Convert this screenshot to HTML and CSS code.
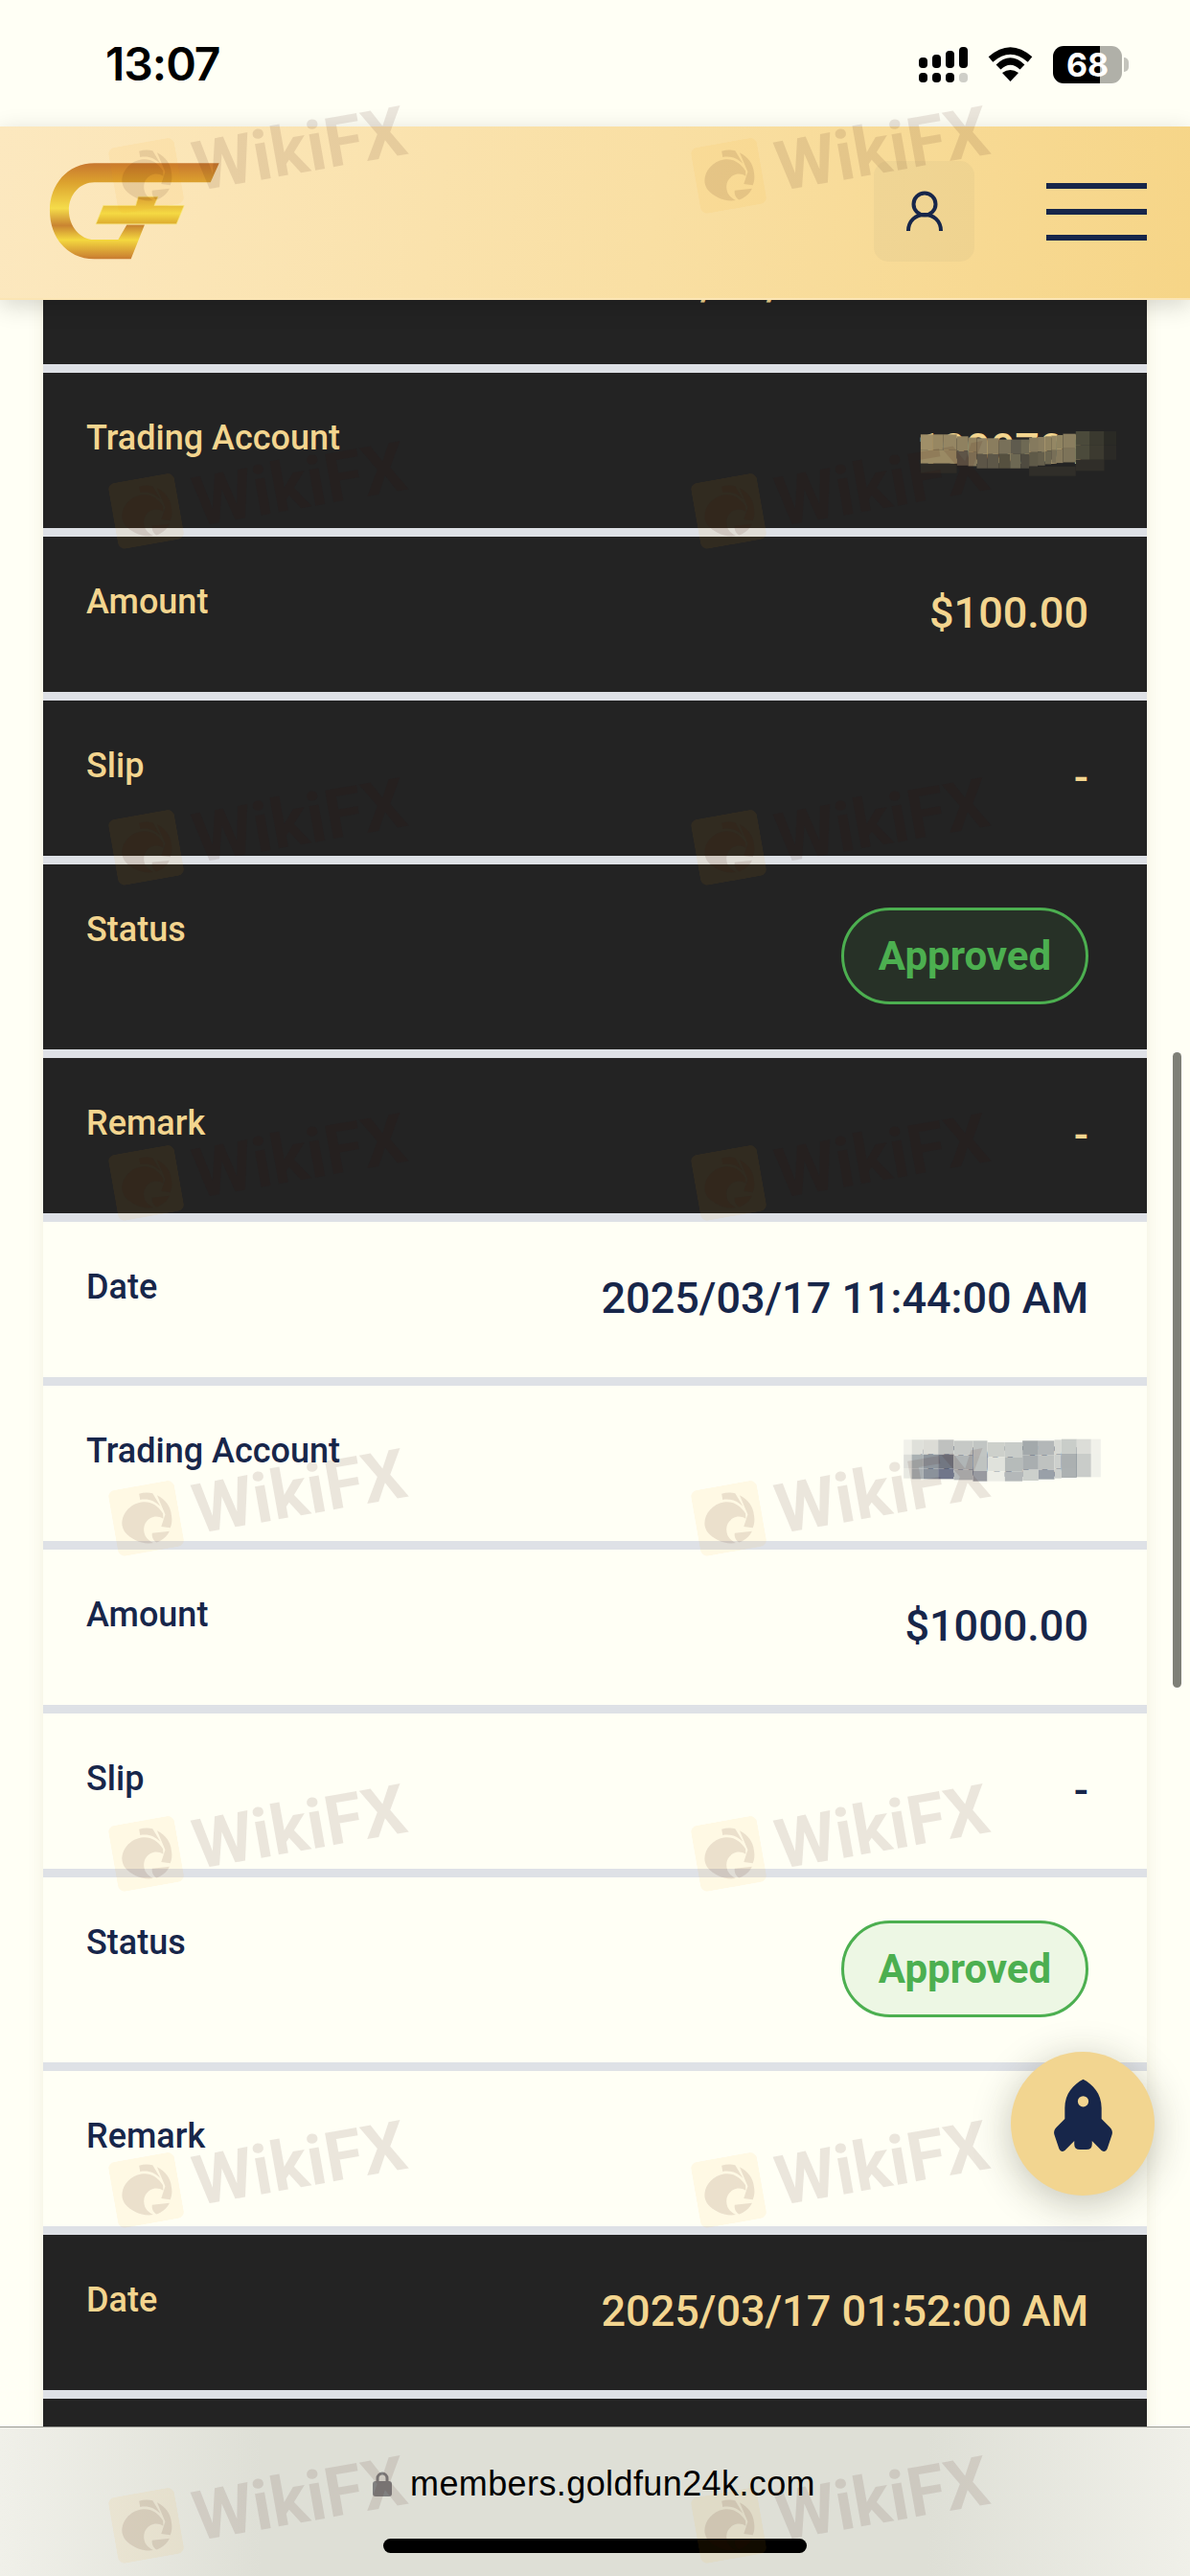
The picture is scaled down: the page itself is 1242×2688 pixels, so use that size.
FILE: index.html
```html
<!DOCTYPE html>
<html lang="en">
<head>
<meta charset="utf-8">
<title>Deposit history</title>
<link rel="stylesheet" href="styles.css">
</head>
<body>
<svg class="defs" aria-hidden="true">
  <symbol id="eagle" viewBox="0 0 100 100">
    <rect class="wm-square" width="100" height="100" rx="11"/>
    <path class="wm-ink" d="M13 54C14 38 29 25 47 25C60 25 70 33 76 47L75 55C70 50 63 48 56 51C46 55 42 64 44 75C46 81 50 85 54 88C37 88 22 76 16 66C14 62 13 58 13 54Z"/>
    <path class="wm-ink" d="M46 12C53 11 60 12 66 15L74 36C67 26 58 21 46 21Z"/>
    <path class="wm-ink" d="M72 19C83 27 89 39 88 52C88 60 86 65 83 70L70 66L79 49Z"/>
    <path class="wm-ink" d="M55 73L81 75C75 83 67 87 59 88C55 84 53 79 55 73Z"/>
  </symbol>
</svg>
<div class="screen">
  <div class="statusbar">
    <span class="clock">13:07</span>
    <div class="status-icons">
      <svg class="signal" viewBox="0 0 51 37">
        <rect x="0" y="11" width="9" height="11" rx="4"/><rect x="14" y="8" width="9" height="14" rx="4"/><rect x="28" y="4" width="9" height="18" rx="4"/><rect x="42" y="0" width="9" height="22" rx="4"/>
        <rect x="0" y="27" width="9" height="10" rx="4"/><rect x="14" y="27" width="9" height="10" rx="4"/><rect x="28" y="27" width="9" height="10" rx="4"/><rect class="signal-off" x="42" y="27" width="9" height="10" rx="4"/>
      </svg>
      <svg class="wifi" viewBox="0 0 47 36">
        <path class="wifi-arc" d="M3 13Q23.500 -5 44 13"/><path class="wifi-arc" d="M11 21Q23.500 9 36 21"/><path d="M23.500 36L15 27Q23.500 21 32 27Z"/>
      </svg>
      <div class="battery"><span class="battery-level">68</span></div>
    </div>
  </div>

  <header class="topbar">
    <svg class="logo" viewBox="145 148 540 310">
      <defs>
        <linearGradient id="goldG" gradientUnits="userSpaceOnUse" x1="0" y1="152" x2="0" y2="453">
          <stop offset="0" stop-color="#c8772f"/><stop offset=".2" stop-color="#dca22e"/><stop offset=".47" stop-color="#f5dc4a"/><stop offset=".65" stop-color="#c98431"/><stop offset=".8" stop-color="#f4d83f"/><stop offset="1" stop-color="#c87a30"/>
        </linearGradient>
        <linearGradient id="goldP" gradientUnits="userSpaceOnUse" x1="0" y1="257" x2="0" y2="345">
          <stop offset="0" stop-color="#d9a037"/><stop offset=".6" stop-color="#f5d943"/><stop offset="1" stop-color="#dba82d"/>
        </linearGradient>
      </defs>
      <path fill="url(#goldG)" d="M682 152L290 152C205 152 150 220 150 300C150 385 205 453 290 453L405 453L448 345L392 345L365 392L290 392C245 392 210 350 210 300C210 250 245 212 290 212L655 212Z"/>
      <path fill="url(#goldP)" stroke="#f7e77a" stroke-width="2" d="M428 257L490 257L478 285L572 285L548 343L295 343L318 285L420 285Z"/>
    </svg>
    <div class="topbar-actions">
      <button class="profile-btn" type="button" aria-label="Profile">
        <svg class="profile-icon" viewBox="0 0 40 44"><circle cx="20" cy="14" r="11.500"/><path d="M3 42C3 31 11 25 20 25C29 25 37 31 37 42"/></svg>
      </button>
      <div class="burger"><span></span><span></span><span></span></div>
    </div>
  </header>

  <main class="content">
    <div class="records">
      <div class="row dark"><span class="label">Date</span><span class="value">2025/03/17 02:10:00 PM</span></div>
      <div class="row dark"><span class="label">Trading Account</span>
        <span class="value masked">1000701
          <svg class="patch patch-dark" viewBox="183 90 620 145">
            <rect x="183" y="100" width="37" height="50" fill="#a08f68"/><rect x="220" y="100" width="35" height="50" fill="#978762"/><rect x="255" y="100" width="42" height="50" fill="#958663"/><rect x="297" y="106" width="36" height="46" fill="#8f8160"/><rect x="333" y="110" width="27" height="46" fill="#91825f"/><rect x="360" y="112" width="33" height="50" fill="#8e8163"/><rect x="393" y="112" width="37" height="50" fill="#8a7d5e"/><rect x="430" y="116" width="35" height="46" fill="#787059"/><rect x="465" y="116" width="33" height="46" fill="#5f5b4e"/><rect x="498" y="116" width="27" height="46" fill="#6e6954"/><rect x="525" y="110" width="27" height="46" fill="#857a5e"/><rect x="552" y="108" width="23" height="46" fill="#8a7e60"/><rect x="575" y="106" width="20" height="46" fill="#8f8260"/><rect x="595" y="104" width="17" height="46" fill="#948764"/><rect x="612" y="102" width="20" height="44" fill="#8f8360"/><rect x="632" y="98" width="40" height="46" fill="#8a7e5f"/><rect x="672" y="90" width="45" height="45" fill="#4b4a3b"/><rect x="717" y="90" width="45" height="45" fill="#3a392f"/><rect x="762" y="90" width="38" height="45" fill="#2a2a25"/>
            <rect x="183" y="150" width="114" height="42" fill="#9a8a64"/><rect x="297" y="152" width="36" height="46" fill="#5e5447"/><rect x="333" y="156" width="27" height="44" fill="#85785c"/><rect x="360" y="162" width="33" height="45" fill="#5c5547"/><rect x="393" y="162" width="37" height="45" fill="#5d5748"/><rect x="430" y="162" width="35" height="45" fill="#55503f"/><rect x="465" y="162" width="33" height="45" fill="#6d6853"/><rect x="498" y="162" width="27" height="45" fill="#4f4b40"/><rect x="525" y="156" width="27" height="45" fill="#5f5a48"/><rect x="552" y="154" width="23" height="44" fill="#655f4c"/><rect x="575" y="152" width="20" height="42" fill="#6c6650"/><rect x="595" y="150" width="17" height="42" fill="#786f57"/><rect x="612" y="146" width="20" height="44" fill="#85795c"/><rect x="632" y="144" width="40" height="44" fill="#7d7359"/><rect x="672" y="135" width="45" height="45" fill="#4b4a3b"/><rect x="717" y="135" width="45" height="45" fill="#3c3a30"/><rect x="762" y="135" width="38" height="45" fill="#2b2a26"/>
            <rect x="183" y="192" width="114" height="30" fill="#2e2b26"/><rect x="525" y="201" width="147" height="30" fill="#302e29"/><rect x="672" y="180" width="90" height="35" fill="#302e29"/>
          </svg>
        </span></div>
      <div class="row dark"><span class="label">Amount</span><span class="value">$100.00</span></div>
      <div class="row dark"><span class="label">Slip</span><span class="value">-</span></div>
      <div class="row dark"><span class="label">Status</span><span class="badge">Approved</span></div>
      <div class="row dark"><span class="label">Remark</span><span class="value">-</span></div>

      <div class="row light"><span class="label">Date</span><span class="value">2025/03/17 11:44:00 AM</span></div>
      <div class="row light"><span class="label">Trading Account</span>
        <span class="value masked">1000701
          <svg class="patch patch-light" viewBox="128 118 620 135">
            <rect x="128" y="122" width="25" height="46" fill="#f1f1ea"/><rect x="153" y="122" width="37" height="46" fill="#dfe0da"/><rect x="190" y="122" width="46" height="46" fill="#dcdcd6"/><rect x="236" y="122" width="49" height="46" fill="#bfc1bf"/><rect x="285" y="125" width="60" height="46" fill="#c6c9c6"/><rect x="345" y="125" width="45" height="50" fill="#c1c5c3"/><rect x="390" y="130" width="55" height="46" fill="#cdd0cb"/><rect x="445" y="130" width="55" height="46" fill="#c8ccc9"/><rect x="500" y="125" width="50" height="46" fill="#a3a9ab"/><rect x="550" y="125" width="50" height="46" fill="#b3b7b8"/><rect x="600" y="122" width="22" height="46" fill="#d7d9d4"/><rect x="622" y="120" width="48" height="46" fill="#c9cdc9"/><rect x="670" y="120" width="45" height="46" fill="#dcddd8"/><rect x="715" y="120" width="30" height="46" fill="#f1f1ea"/>
            <rect x="128" y="168" width="25" height="45" fill="#dedfda"/><rect x="153" y="168" width="37" height="45" fill="#aab1b3"/><rect x="190" y="168" width="46" height="45" fill="#8f969d"/><rect x="236" y="168" width="49" height="45" fill="#727782"/><rect x="285" y="171" width="60" height="45" fill="#b0b5b6"/><rect x="345" y="175" width="45" height="45" fill="#bfc3c1"/><rect x="390" y="176" width="55" height="45" fill="#e0e2dc"/><rect x="445" y="176" width="55" height="45" fill="#b6bbba"/><rect x="500" y="171" width="50" height="45" fill="#a9aeb0"/><rect x="550" y="171" width="50" height="45" fill="#bfc2c0"/><rect x="600" y="168" width="22" height="45" fill="#cdd0cd"/><rect x="622" y="166" width="48" height="45" fill="#abb0b1"/><rect x="670" y="166" width="45" height="45" fill="#c9ccc9"/><rect x="715" y="166" width="30" height="45" fill="#f0f1ea"/>
            <rect x="128" y="213" width="25" height="30" fill="#e8e9e2"/><rect x="153" y="213" width="37" height="32" fill="#a9afb2"/><rect x="190" y="213" width="46" height="32" fill="#8b929b"/><rect x="236" y="213" width="49" height="32" fill="#70768a"/><rect x="285" y="216" width="60" height="32" fill="#b4b8b9"/><rect x="345" y="220" width="45" height="32" fill="#989aa0"/><rect x="390" y="221" width="55" height="31" fill="#ecede6"/><rect x="445" y="221" width="55" height="31" fill="#b4b8b9"/><rect x="500" y="216" width="50" height="34" fill="#ccd0cc"/><rect x="550" y="216" width="50" height="30" fill="#99a0a8"/><rect x="600" y="213" width="22" height="30" fill="#cdd0cd"/><rect x="622" y="211" width="48" height="30" fill="#acb1b2"/><rect x="670" y="211" width="45" height="28" fill="#c9ccc9"/><rect x="715" y="211" width="30" height="28" fill="#f0f1ea"/>
          </svg>
        </span></div>
      <div class="row light"><span class="label">Amount</span><span class="value">$1000.00</span></div>
      <div class="row light"><span class="label">Slip</span><span class="value">-</span></div>
      <div class="row light"><span class="label">Status</span><span class="badge">Approved</span></div>
      <div class="row light"><span class="label">Remark</span><span class="value">-</span></div>

      <div class="row dark"><span class="label">Date</span><span class="value">2025/03/17 01:52:00 AM</span></div>
      <div class="row dark"></div>
    </div>
  </main>

  <footer class="urlbar">
    <div class="address">
      <svg class="lock" viewBox="0 0 20 26"><path class="lock-shackle" d="M5 12V7A5 5 0 0 1 15 7V12"/><rect y="10" width="20" height="16" rx="3"/></svg>
      <span class="url">members.goldfun24k.com</span>
    </div>
    <div class="home-indicator"></div>
  </footer>

  <div class="scrollbar"></div>

  <button class="fab" type="button" aria-label="Back to top">
    <svg class="rocket" viewBox="595 568 190 236">
      <path d="M690 570C720 585 748 615 748 660L748 695L775 722Q785 733 781 745L766 790Q760 803 748 795L718 765L718 775Q718 792 700 792L680 792Q662 792 662 775L662 765L632 795Q620 803 614 790L599 745Q595 733 605 722L632 695L632 660C632 615 660 585 690 570Z"/>
      <circle class="rocket-window" cx="690" cy="640" r="17"/>
    </svg>
  </button>

  <div class="watermarks" aria-hidden="true">
    <div class="wm"><svg class="wm-icon"><use href="#eagle"/></svg><span class="wm-text">WikiFX</span></div>
    <div class="wm"><svg class="wm-icon"><use href="#eagle"/></svg><span class="wm-text">WikiFX</span></div>
    <div class="wm"><svg class="wm-icon"><use href="#eagle"/></svg><span class="wm-text">WikiFX</span></div>
    <div class="wm"><svg class="wm-icon"><use href="#eagle"/></svg><span class="wm-text">WikiFX</span></div>
    <div class="wm"><svg class="wm-icon"><use href="#eagle"/></svg><span class="wm-text">WikiFX</span></div>
    <div class="wm"><svg class="wm-icon"><use href="#eagle"/></svg><span class="wm-text">WikiFX</span></div>
    <div class="wm"><svg class="wm-icon"><use href="#eagle"/></svg><span class="wm-text">WikiFX</span></div>
    <div class="wm"><svg class="wm-icon"><use href="#eagle"/></svg><span class="wm-text">WikiFX</span></div>
    <div class="wm"><svg class="wm-icon"><use href="#eagle"/></svg><span class="wm-text">WikiFX</span></div>
    <div class="wm"><svg class="wm-icon"><use href="#eagle"/></svg><span class="wm-text">WikiFX</span></div>
    <div class="wm"><svg class="wm-icon"><use href="#eagle"/></svg><span class="wm-text">WikiFX</span></div>
    <div class="wm"><svg class="wm-icon"><use href="#eagle"/></svg><span class="wm-text">WikiFX</span></div>
    <div class="wm"><svg class="wm-icon"><use href="#eagle"/></svg><span class="wm-text">WikiFX</span></div>
    <div class="wm"><svg class="wm-icon"><use href="#eagle"/></svg><span class="wm-text">WikiFX</span></div>
    <div class="wm"><svg class="wm-icon"><use href="#eagle"/></svg><span class="wm-text">WikiFX</span></div>
    <div class="wm"><svg class="wm-icon"><use href="#eagle"/></svg><span class="wm-text">WikiFX</span></div>
  </div>
</div>
</body>
</html>
```

FILE: styles.css
```css
* { box-sizing: border-box; }
html, body { margin: 0; padding: 0; }
body { background: #fffff5; font-family: Roboto, "Liberation Sans", sans-serif; }
.defs { position: absolute; width: 0; height: 0; }

.screen {
  position: relative;
  width: 1242px;
  height: 2688px;
  display: flex;
  flex-direction: column;
  overflow: hidden;
  background: #fffff5;
}

/* status bar */
.statusbar {
  flex: 0 0 132px;
  display: flex;
  justify-content: space-between;
  align-items: flex-start;
  padding: 48px 64px 0 110px;
}
.clock {
  font-family: Inter, "Liberation Sans", sans-serif;
  font-size: 48px;
  font-weight: 600;
  line-height: 38px;
  color: #000;
  letter-spacing: -1px;
}
.status-icons { display: flex; align-items: flex-start; gap: 21px; }
.signal { width: 51px; height: 37px; margin-top: 1px; fill: #000; }
.signal-off { fill: #cfcfc8; }
.wifi { width: 47px; height: 36px; margin-top: 1px; fill: #000; }
.wifi-arc { fill: none; stroke: #000; stroke-width: 7; }
.battery {
  position: relative;
  width: 72px;
  height: 39px;
  margin-right: 7px;
  border-radius: 11px;
  background: linear-gradient(90deg, #000 68%, #b0b0a8 68%);
  display: flex;
  align-items: center;
  justify-content: center;
}
.battery::after {
  content: "";
  position: absolute;
  left: 74px;
  top: 12px;
  width: 5px;
  height: 15px;
  border-radius: 0 5px 5px 0;
  background: #c4c4bc;
}
.battery-level {
  font-family: Inter, "Liberation Sans", sans-serif;
  font-size: 34px;
  font-weight: 700;
  line-height: 39px;
  color: #fff;
}

/* top bar */
.topbar {
  position: relative;
  z-index: 2;
  flex: 0 0 181px;
  display: flex;
  justify-content: space-between;
  align-items: center;
  padding: 0 45px 2px 50px;
  background: linear-gradient(100deg, #fce8bf 0%, #f9dfa3 55%, #f6d587 100%);
  border-bottom: 2px solid #fbe5b4;
  box-shadow: 0 6px 24px rgba(0, 0, 0, .16);
}
.logo { width: 180px; height: 103px; }
.topbar-actions { display: flex; align-items: center; gap: 75px; }
.profile-btn {
  width: 105px;
  height: 105px;
  padding: 0;
  border: 0;
  border-radius: 15px;
  background: rgba(120, 120, 110, .06);
  display: flex;
  align-items: center;
  justify-content: center;
}
.profile-icon { width: 40px; height: 44px; fill: none; stroke: #17264a; stroke-width: 4; }
.burger { width: 105px; height: 60px; display: flex; flex-direction: column; justify-content: space-between; }
.burger span { display: block; height: 6px; background: #17264a; }

/* records */
.content { flex: 1 1 0; min-height: 0; overflow: hidden; padding: 0 45px; }
.records {
  display: flex;
  flex-direction: column;
  gap: 9px;
  margin-top: -95px;
  background: #dee1e6;
  box-shadow: 0 0 16px rgba(120, 100, 40, .1);
}
.row {
  flex: 0 0 auto;
  min-height: 162px;
  display: flex;
  justify-content: space-between;
  align-items: flex-start;
  padding: 44px 61px 47px 45px;
}
.dark { background: #232323; color: #f3d58f; }
.light { background: #fffff5; color: #17264a; }
.label { font-size: 36px; font-weight: 500; line-height: 48px; }
.value { font-size: 45px; font-weight: 500; line-height: 71px; white-space: nowrap; }
.masked { position: relative; }
.patch { position: absolute; display: block; }
.patch-dark { width: 207px; height: 48px; right: -31px; top: 17px; }
.patch-light { width: 207px; height: 45px; right: -14px; top: 11px; }
.badge {
  margin-top: 1px;
  width: 258px;
  height: 101px;
  border: 3px solid #4caf50;
  border-radius: 51px;
  background: rgba(76, 175, 80, .1);
  color: #4caf50;
  font-size: 42px;
  font-weight: 700;
  line-height: 95px;
  text-align: center;
}

/* browser bar */
.urlbar {
  position: relative;
  z-index: 1;
  flex: 0 0 156px;
  display: flex;
  flex-direction: column;
  align-items: center;
  border-top: 1px solid #9a9a94;
  background: linear-gradient(90deg, #f0f0e9 0%, #dedfd6 22%, #dedfd6 78%, #f0f0e9 100%);
}
.address { display: flex; align-items: center; gap: 19px; height: 44px; margin-top: 37px; padding-right: 2px; }
.lock { width: 20px; height: 26px; fill: #7f7f7f; }
.lock-shackle { fill: none; stroke: #7f7f7f; stroke-width: 3; }
.url { font-family: "Liberation Sans", Arial, sans-serif; font-size: 36px; letter-spacing: .4px; line-height: 44px; color: #000; }
.home-indicator { width: 442px; height: 15px; margin-top: 35px; border-radius: 8px; background: #000; }

/* overlays */
.scrollbar {
  position: absolute;
  left: 1224px;
  top: 1098px;
  width: 9px;
  height: 663px;
  border-radius: 5px;
  background: #7e7f77;
}
.fab {
  position: absolute;
  left: 1055px;
  top: 2141px;
  z-index: 3;
  width: 150px;
  height: 150px;
  padding: 0 0 16px;
  border: 0;
  border-radius: 50%;
  background: #f2d590;
  box-shadow: 0 8px 40px rgba(40, 40, 20, .28);
  display: flex;
  align-items: center;
  justify-content: center;
}
.rocket { width: 63px; height: 78px; fill: #17264a; }
.rocket-window { fill: #f2d590; }

.watermarks {
  position: absolute;
  inset: 0;
  z-index: 5;
  display: grid;
  grid-template-columns: repeat(2, 608px);
  grid-auto-rows: 350.3px;
  padding: 155px 0 0 112px;
  pointer-events: none;
}
.wm {
  display: flex;
  align-items: flex-start;
  gap: 15px;
  height: 70px;
  transform: rotate(-10deg);
  transform-origin: 0 0;
}
.wm-icon { flex: 0 0 70px; width: 70px; height: 70px; }
.wm-square { fill: rgba(255, 170, 0, .065); }
.wm-ink { fill: rgba(55, 5, 0, .1); }
.wm-text {
  font-family: Roboto, "Liberation Sans", sans-serif;
  font-size: 72px;
  font-weight: 700;
  line-height: 72px;
  color: rgba(55, 5, 0, .1);
  white-space: nowrap;
}
```
